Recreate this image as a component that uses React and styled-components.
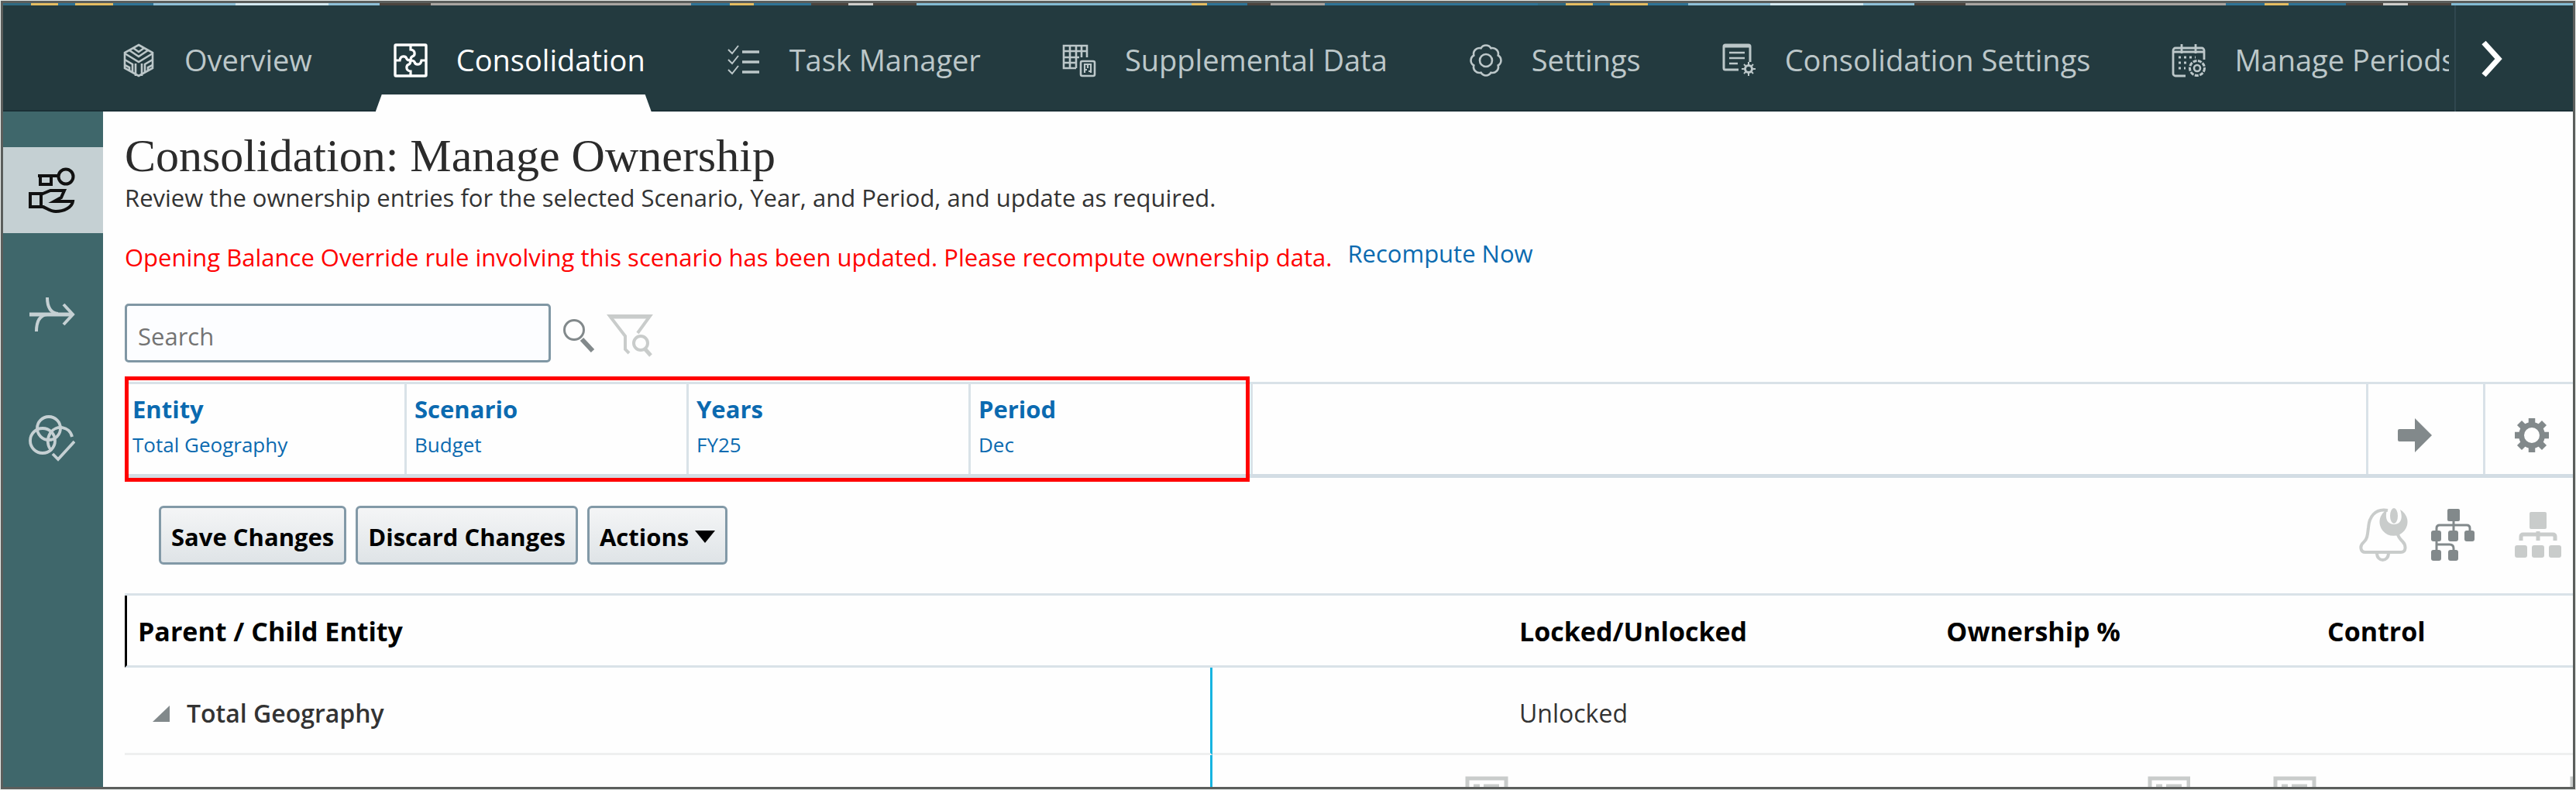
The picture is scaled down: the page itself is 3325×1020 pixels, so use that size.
import { useState } from "react";
import styled, { createGlobalStyle } from "styled-components";

const colors = {
    nav: '#233a3f',
    rail: '#3f676b',
    railActive: '#c5d0d3',
    frame: '#5b5e5c',
    page: '#fefefe',
    line: '#d9e2e8',
    rowLine: '#eeefef',
    link: '#0b6ab0',
    text: '#333333',
    iconDark: '#82898b',
    iconLight: '#c9cccb',
}

const GlobalStyle = createGlobalStyle`
    * { box-sizing: border-box; }
    body {
        margin: 0;
        background-color: #e4e8e6;
        font-family: 'Open Sans', 'Noto Sans', sans-serif;
        color: ${colors.text};
    }
    button { font-family: inherit; cursor: pointer; }
`
const Frame = styled.div`
    display: flex;
    flex-direction: column;
    height: 100vh;
    border: 1px solid #e4e8e6;
    background-color: ${colors.page};
    overflow: hidden;
`
const Window = styled.div`
    display: flex;
    flex-direction: column;
    flex: 1;
    min-height: 0;
    border: 3px solid ${colors.frame};
`
const Banner = styled.div`
    height: 3px;
    flex: none;
    background-size: 1981px 3px;
    background-image: linear-gradient(90deg,
        #2f6a83 0 36px, #e5bd62 36px 71px, #2f7396 71px 93px, #e5bd62 93px 142px,
        #2f7396 142px 194px, #8fc0d8 194px 300px, #d3e8f0 300px 420px, #8fc0d8 420px 486px,
        #4b443e 486px 552px, #a9a5a1 552px 888px, #2f7396 888px 938px, #e5bd62 938px 969px,
        #2f7396 969px 1043px, #4b443e 1043px 1091px, #cfcdca 1091px 1123px, #4b443e 1123px 1179px,
        #83bad3 1179px 1534px, #e5bd62 1534px 1554px, #2f7396 1554px 1606px, #4b443e 1606px 1636px,
        #a9a5a1 1636px 1706px, #2f7396 1706px 1981px);
`
const NavBar = styled.header`
    display: flex;
    flex: none;
    height: 137px;
    background-color: ${colors.nav};
    box-shadow: inset 0 -2px #1b3036;
`
const NavList = styled.nav`
    display: flex;
    flex: 1;
    gap: 74px;
    min-width: 0;
    padding-left: 130px;
    margin-right: 7px;
    overflow: hidden;
`
const NavItem = styled.a`
    display: flex;
    flex: none;
    position: relative;
    align-items: center;
    gap: 37px;
    height: 137px;
    padding: 2px 8px 0 23px;
    font-size: 38px;
    line-height: 52px;
    text-decoration: none;
    white-space: nowrap;
    color: ${({ $active }) => $active ? '#ffffff' : '#bcc7c9'};

    svg {
        margin-top: 3px;
    }
    &::after {
        content: '';
        display: ${({ $active }) => $active ? 'block' : 'none'};
        position: absolute;
        left: 0;
        right: 0;
        bottom: 0;
        height: 22px;
        background-color: ${colors.page};
        clip-path: polygon(8px 0, calc(100% - 8px) 0, 100% 100%, 0 100%);
    }
`
const NavMore = styled.button`
    display: flex;
    align-items: center;
    width: 153px;
    padding: 0 0 0 32px;
    border: none;
    border-left: 2px solid #30474f;
    background-color: transparent;
    color: #ffffff;
`
const Body = styled.div`
    display: flex;
    flex: 1;
    min-height: 0;
`
const Rail = styled.aside`
    display: flex;
    flex-direction: column;
    flex: none;
    gap: 49px;
    width: 129px;
    padding-top: 46px;
    background-color: ${colors.rail};
`
const RailButton = styled.button`
    display: flex;
    align-items: center;
    justify-content: center;
    height: 111px;
    padding: 0 4px 0 0;
    border: none;
    background-color: ${({ $active }) => $active ? colors.railActive : 'transparent'};
    color: ${({ $active }) => $active ? '#111111' : '#c5d0d3'};
`
const Main = styled.main`
    flex: 1;
    min-width: 0;
    padding: 23px 0 0 28px;
    overflow: hidden;
`
const Title = styled.h1`
    margin: 0;
    font-family: Georgia, 'Liberation Serif', serif;
    font-size: 60px;
    font-weight: normal;
    line-height: 68px;
    color: #2b2b2b;
`
const Description = styled.p`
    margin: 0;
    font-size: 31px;
    line-height: 40px;
`
const Notice = styled.div`
    display: flex;
    align-items: center;
    gap: 20px;
    margin-top: 37px;
    font-size: 31px;
    line-height: 40px;
    color: #ff0000;
`
const RecomputeLink = styled.a`
    padding-bottom: 10px;
    line-height: 30px;
    text-decoration: none;
    color: ${colors.link};
`
const SearchRow = styled.form`
    display: flex;
    align-items: center;
    gap: 15px;
    margin-top: 40px;

    button {
        padding-top: 5px;
    }
`
const SearchInput = styled.input`
    width: 550px;
    height: 76px;
    padding: 8px 14px 0;
    border: 3px solid #8097a4;
    border-radius: 5px;
    background-color: #fcfdff;
    font-family: inherit;
    font-size: 31px;
    color: ${colors.text};

    &::placeholder {
        color: #737373;
        opacity: 1;
    }
`
const IconButton = styled.button`
    display: flex;
    align-items: center;
    justify-content: center;
    padding: 0;
    border: none;
    background-color: transparent;
    color: ${({ $light }) => $light ? colors.iconLight : colors.iconDark};
`
const PovBar = styled.section`
    display: flex;
    height: 124px;
    margin-top: 25px;
    border-top: 3px solid ${colors.line};
    border-bottom: 5px solid #d3dde4;
`
const PovMembers = styled.div`
    display: flex;
    flex: none;
    position: relative;

    &::after {
        content: '';
        position: absolute;
        inset: -10px 4px -10px 0;
        border: 5px solid #ff0000;
        pointer-events: none;
    }
`
const PovMember = styled.button`
    display: flex;
    flex-direction: column;
    align-items: flex-start;
    width: 364px;
    padding: 8px 10px 0;
    border: none;
    border-right: 3px solid ${colors.line};
    background-color: transparent;
    color: ${colors.link};
`
const PovName = styled.span`
    font-size: 31px;
    font-weight: 700;
    line-height: 48px;
`
const PovValue = styled.span`
    font-size: 26px;
    line-height: 44px;
`
const PovAction = styled(IconButton)`
    justify-content: flex-start;
    width: ${({ $width }) => $width}px;
    padding: 16px 0 0 38px;
    border-left: 3px solid ${colors.line};

    &:first-of-type {
        margin-left: auto;
    }
`
const Toolbar = styled.div`
    display: flex;
    align-items: center;
    gap: 12px;
    height: 76px;
    margin: 36px 14px 37px 44px;
`
const ToolButton = styled.button`
    display: flex;
    align-items: center;
    gap: 8px;
    height: 76px;
    padding: 4px 13px 0;
    border: 3px solid #8299a7;
    border-radius: 6px;
    background: linear-gradient(#f4f5f6, #dfe4e7);
    font-size: 31px;
    font-weight: 700;
    white-space: nowrap;
    color: #000000;
`
const ViewButtons = styled.div`
    display: flex;
    gap: 28px;
    margin-left: auto;

    button:last-child {
        margin-left: 22px;
    }
`
const Grid = styled.table`
    width: 100%;
    table-layout: fixed;
    border-collapse: separate;
    border-spacing: 0;
    border-top: 3px solid ${colors.line};
`
const Col = styled.col`
    width: ${({ $width }) => $width}px;
`
const HeadCell = styled.th`
    height: 93px;
    padding: 2px 14px 0;
    border-bottom: 3px solid ${colors.line};
    border-left: ${({ $first }) => $first ? '3px solid #000000' : 'none'};
    font-size: 34px;
    font-weight: 700;
    line-height: 44px;
    text-align: ${({ $right }) => $right ? 'right' : 'left'};
    white-space: nowrap;
    color: #000000;
`
const Cell = styled.td`
    height: 113px;
    padding: 8px 14px 0;
    border-bottom: 3px solid ${colors.rowLine};
    border-right: ${({ $divider }) => $divider ? '3px solid #17b4e0' : 'none'};
    font-size: 32px;
    line-height: 44px;
    white-space: nowrap;
`
const IconCell = styled(Cell)`
    padding: 27px 0 0 21px;
    vertical-align: top;
    overflow: hidden;
`
const TreeLabel = styled.div`
    display: flex;
    align-items: center;
    gap: 22px;
    padding-left: 22px;
    font-weight: 600;
`

const NavIcon = ({ children }) => (
    <svg width="44" height="44" viewBox="0 0 44 44" fill="none" stroke="currentColor" strokeWidth="2.6" aria-hidden="true">
        {children}
    </svg>
)

const OverviewIcon = () => (
    <NavIcon>
        <path d="M22 2 40 12v20L22 42 4 32V12z" />
        <path d="M10 9l12 8 12-8M15 6l7 5 7-5M4 13l18 11 18-11M18 42V26M26 42V26M4 21l10 6v11M40 21l-10 6v11M4 28l6 3v5M40 28l-6 3v5" />
    </NavIcon>
)
const ConsolidationIcon = () => (
    <NavIcon>
        <rect x="2" y="2" width="40" height="40" rx="1" strokeWidth="3.4" />
        <path d="M22 3v5c7 1 6 8 2 9-2 1-2 3-2 5M41 22h-5c-1 7-8 6-9 2-1-2-3-2-5-2M22 41v-5c-7-1-6-8-2-9 2-1 2-3 2-5M3 22h5c1-7 8-6 9-2 1 2 3 2 5 2" strokeWidth="3.2" />
    </NavIcon>
)
const TaskIcon = () => (
    <NavIcon>
        <path d="M2 8l5 5 8-10M2 21l5 5 8-10M2 34l5 5 8-10" strokeWidth="2" />
        <path d="M20 11h22M20 24h22M20 37h22" strokeWidth="3.6" />
    </NavIcon>
)
const SupplementalIcon = () => (
    <NavIcon>
        <path d="M18 32H2V3h30v15M2 10h30M2 18h20M2 25h15M10 3v29M18 3v29M25 3v15" />
        <rect x="24" y="23" width="18" height="19" rx="2" />
        <path d="M29 38V27h8v11M33 28v4M29 34h3M34 36h4" strokeWidth="2.2" />
    </NavIcon>
)
const SettingsIcon = () => (
    <NavIcon>
        <path d="M37.7 28.5A7.5 7.5 0 0 1 28.5 37.7 7.5 7.5 0 0 1 15.500 37.7 7.5 7.5 0 0 1 6.300 28.5 7.5 7.5 0 0 1 6.300 15.500 7.5 7.5 0 0 1 15.500 6.300 7.5 7.5 0 0 1 28.5 6.300 7.5 7.5 0 0 1 37.7 15.500 7.5 7.5 0 0 1 37.7 28.5z" />
        <circle cx="22" cy="22" r="8" />
    </NavIcon>
)
const ConsolidationSettingsIcon = () => (
    <NavIcon>
        <path d="M21 34H4a2 2 0 0 1-2-2V4a2 2 0 0 1 2-2h30a2 2 0 0 1 2 2v20M2 4h34" strokeWidth="3" />
        <path d="M9 12h20M9 19h20M9 26h11" />
        <circle cx="34" cy="33" r="4.500" strokeWidth="3" />
        <path d="M34 24v4M34 38v4M25 33h4M39 33h4M28 27l2.500 2.500M37.500 36.500 40 39M28 39l2.500-2.500M37.500 29.500 40 27" strokeWidth="2" />
    </NavIcon>
)
const ManagePeriodsIcon = () => (
    <NavIcon>
        <path d="M18 42H5a3 3 0 0 1-3-3V9a3 3 0 0 1 3-3h34a3 3 0 0 1 3 3v12M2 11h40M13 1v12M31 1v12" strokeWidth="2.800" />
        <path d="M9 18h22M9 25h13M9 32h9" strokeDasharray="3 4" strokeWidth="3" />
        <circle cx="33" cy="32" r="9.500" strokeDasharray="5 1.500" strokeWidth="3" />
        <circle cx="33" cy="32" r="4" />
    </NavIcon>
)

const OwnershipIcon = () => (
    <svg width="60" height="60" viewBox="0 0 60 60" fill="none" stroke="currentColor" strokeWidth="4" aria-hidden="true">
        <circle cx="48" cy="12" r="9.500" />
        <path d="M39 11H12M15 12v10h14V12" />
        <path d="M2 34h14v17H2zM16 35l12-5h18l-4 9-9 5h24c-1 8-12 13-22 13-8 0-12-5-19-7" />
    </svg>
)
const FlowIcon = () => (
    <svg width="60" height="46" viewBox="0 0 60 46" fill="none" stroke="currentColor" strokeWidth="4" aria-hidden="true">
        <path d="M1 23h56" strokeWidth="5" />
        <path d="M45 10l12 13-12 13M24 1c0 11 3 20 14 21M10 45c0-12 4-21 14-22" />
    </svg>
)
const RulesIcon = () => (
    <svg width="60" height="60" viewBox="0 0 60 60" fill="none" stroke="currentColor" strokeWidth="3.800" aria-hidden="true">
        <circle cx="26" cy="17" r="15" />
        <circle cx="18" cy="33" r="16" />
        <path d="M56 28C53 14 35 12 28 23c-5 8-4 18 2 23M31 50l7 7 21-23" />
    </svg>
)
const MagnifierIcon = () => (
    <svg width="42" height="44" viewBox="0 0 42 44" fill="none" stroke="currentColor" aria-hidden="true">
        <circle cx="15" cy="15" r="12.500" strokeWidth="3" />
        <path d="M25 27l14 15" strokeWidth="6" />
    </svg>
)
const FilterIcon = () => (
    <svg width="60" height="56" viewBox="0 0 60 56" fill="none" stroke="currentColor" strokeWidth="4" aria-hidden="true">
        <path d="M29 51l-5-5V29L4 3h52L40 25" />
        <path d="M4 4h52" strokeWidth="5" />
        <circle cx="44" cy="38" r="9" />
        <path d="M49 45l8 9" strokeWidth="5" />
    </svg>
)
const ArrowIcon = () => (
    <svg width="44" height="44" viewBox="0 0 44 44" fill="currentColor" aria-hidden="true">
        <path d="M2 14h20V0l22 22-22 22V30H2q-2 0-2-2V16q0-2 2-2z" />
    </svg>
)
const GearIcon = () => (
    <svg width="44" height="44" viewBox="0 0 44 44" fill="none" stroke="currentColor" aria-hidden="true">
        <circle cx="22" cy="22" r="13.500" strokeWidth="7" />
        <path d="M22 0v8M22 36v8M0 22h8M36 22h8M6 6l6 6M32 32l6 6M6 38l6-6M32 12l6-6" strokeWidth="8.500" />
    </svg>
)
const BellIcon = () => (
    <svg width="64" height="70" viewBox="0 0 64 70" fill="none" stroke="currentColor" strokeWidth="4" aria-hidden="true">
        <path d="M37 3C20 0 13 12 12 25c-1 8-1 15-6 19-6 5-4 13 2 13h46c7 0 7-9 2-14-3-3-5-5-6-9M23 58c0 12 15 12 15 0" />
        <path d="M36 2a18 18 0 1 0 17 0c4 11 1 19-8 19s-12-8-9-19z" fill="currentColor" stroke="none" />
        <ellipse cx="45" cy="10" rx="5" ry="10" fill="currentColor" stroke="none" />
    </svg>
)
const TreeIcon = () => (
    <svg width="58" height="68" viewBox="0 0 58 68" fill="currentColor" aria-hidden="true">
        <rect x="22" y="0" width="16" height="16" rx="2" />
        <rect x="1" y="28" width="13" height="14" rx="3" />
        <rect x="23" y="28" width="13" height="14" rx="3" />
        <rect x="44" y="28" width="13" height="14" rx="3" />
        <rect x="1" y="53" width="13" height="14" rx="3" />
        <rect x="23" y="53" width="13" height="14" rx="3" />
        <path d="M30 14v16M8 30v-5q0-4 4-4h35q4 0 4 4v5M8 40v15M8 46h17q5 0 5 5v4" fill="none" stroke="currentColor" strokeWidth="3" />
    </svg>
)
const OrgChartIcon = () => (
    <svg width="62" height="68" viewBox="0 0 62 68" fill="currentColor" aria-hidden="true">
        <rect x="20" y="4" width="22" height="22" rx="2" />
        <rect x="1" y="47" width="16" height="16" rx="3" />
        <rect x="23" y="47" width="16" height="16" rx="3" />
        <rect x="45" y="47" width="16" height="16" rx="3" />
        <path d="M9 41v-5q0-3 3-3h38q3 0 3 3v5M31 29v12" fill="none" stroke="currentColor" strokeWidth="5" />
    </svg>
)
const FormIcon = () => (
    <svg width="56" height="50" viewBox="0 0 56 50" fill="none" stroke="currentColor" aria-hidden="true">
        <path d="M3 50V3h50v47" strokeWidth="5" />
        <path d="M11 13h8M24 13h20M11 24h8M24 24h20" strokeWidth="5" />
    </svg>
)

const tabs = [
    { label: 'Overview', Icon: OverviewIcon },
    { label: 'Consolidation', Icon: ConsolidationIcon },
    { label: 'Task Manager', Icon: TaskIcon },
    { label: 'Supplemental Data', Icon: SupplementalIcon },
    { label: 'Settings', Icon: SettingsIcon },
    { label: 'Consolidation Settings', Icon: ConsolidationSettingsIcon },
    { label: 'Manage Periods', Icon: ManagePeriodsIcon },
]

const railItems = [
    { label: 'Manage Ownership', Icon: OwnershipIcon },
    { label: 'Journals', Icon: FlowIcon },
    { label: 'Rules', Icon: RulesIcon },
]

const members = [
    { name: 'Entity', value: 'Total Geography' },
    { name: 'Scenario', value: 'Budget' },
    { name: 'Years', value: 'FY25' },
    { name: 'Period', value: 'Dec' },
]

const columnWidths = [305, 77, 498, 306, 76, 86, 77, 306, 25]

const App = () => {
    const [activeTab, setActiveTab] = useState('Consolidation')
    const [activeRail, setActiveRail] = useState('Manage Ownership')
    const [search, setSearch] = useState('')

    return (
        <Frame>
            <GlobalStyle />
            <Window>
                <Banner />
                <NavBar>
                    <NavList>
                        {tabs.map(({ label, Icon }) => (
                            <NavItem
                                key={label}
                                href="#"
                                $active={label === activeTab}
                                onClick={() => setActiveTab(label)}>
                                <Icon />
                                {label}
                            </NavItem>
                        ))}
                    </NavList>
                    <NavMore type="button" aria-label="More tabs">
                        <svg width="30" height="48" viewBox="0 0 30 48" fill="none" stroke="currentColor" strokeWidth="7" aria-hidden="true">
                            <path d="M4 3l19 21L4 45" />
                        </svg>
                    </NavMore>
                </NavBar>
                <Body>
                    <Rail>
                        {railItems.map(({ label, Icon }) => (
                            <RailButton
                                key={label}
                                type="button"
                                aria-label={label}
                                $active={label === activeRail}
                                onClick={() => setActiveRail(label)}>
                                <Icon />
                            </RailButton>
                        ))}
                    </Rail>
                    <Main>
                        <Title>Consolidation: Manage Ownership</Title>
                        <Description>
                            Review the ownership entries for the selected Scenario, Year, and Period, and update as required.
                        </Description>
                        <Notice>
                            <span>Opening Balance Override rule involving this scenario has been updated. Please recompute ownership data.</span>
                            <RecomputeLink href="#">Recompute Now</RecomputeLink>
                        </Notice>
                        <SearchRow onSubmit={(event) => event.preventDefault()}>
                            <SearchInput
                                type="text"
                                aria-label="Search"
                                placeholder="Search"
                                value={search}
                                onChange={(event) => setSearch(event.target.value)} />
                            <IconButton type="submit" aria-label="Search"><MagnifierIcon /></IconButton>
                            <IconButton type="button" aria-label="Filter" $light><FilterIcon /></IconButton>
                        </SearchRow>
                        <PovBar>
                            <PovMembers>
                                {members.map(({ name, value }) => (
                                    <PovMember key={name} type="button">
                                        <PovName>{name}</PovName>
                                        <PovValue>{value}</PovValue>
                                    </PovMember>
                                ))}
                            </PovMembers>
                            <PovAction type="button" aria-label="Go" $width={151}><ArrowIcon /></PovAction>
                            <PovAction type="button" aria-label="Settings" $width={116}><GearIcon /></PovAction>
                        </PovBar>
                        <Toolbar>
                            <ToolButton type="button">Save Changes</ToolButton>
                            <ToolButton type="button">Discard Changes</ToolButton>
                            <ToolButton type="button">
                                Actions
                                <svg width="26" height="16" viewBox="0 0 26 16" aria-hidden="true">
                                    <path d="M0 0h26L13 16z" />
                                </svg>
                            </ToolButton>
                            <ViewButtons>
                                <IconButton type="button" aria-label="Notifications" $light><BellIcon /></IconButton>
                                <IconButton type="button" aria-label="Tree view"><TreeIcon /></IconButton>
                                <IconButton type="button" aria-label="Organization chart" $light><OrgChartIcon /></IconButton>
                            </ViewButtons>
                        </Toolbar>
                        <Grid>
                            <colgroup>
                                <col />
                                {columnWidths.map((width, index) => (
                                    <Col key={index} $width={width} />
                                ))}
                            </colgroup>
                            <thead>
                                <tr>
                                    <HeadCell $first>Parent / Child Entity</HeadCell>
                                    <HeadCell as="td" colSpan={2} />
                                    <HeadCell>Locked/Unlocked</HeadCell>
                                    <HeadCell $right>Ownership %</HeadCell>
                                    <HeadCell as="td" colSpan={3} />
                                    <HeadCell>Control</HeadCell>
                                    <HeadCell as="td" />
                                </tr>
                            </thead>
                            <tbody>
                                <tr>
                                    <Cell $divider>
                                        <TreeLabel>
                                            <svg width="22" height="21" viewBox="0 0 22 21" fill={colors.iconDark} aria-hidden="true">
                                                <path d="M22 0v21H0z" />
                                            </svg>
                                            Total Geography
                                        </TreeLabel>
                                    </Cell>
                                    <Cell colSpan={2} />
                                    <Cell>Unlocked</Cell>
                                    <Cell colSpan={6} />
                                </tr>
                                <tr>
                                    <Cell $divider />
                                    <Cell />
                                    <IconCell><IconButton type="button" aria-label="Details" $light><FormIcon /></IconButton></IconCell>
                                    <Cell />
                                    <Cell />
                                    <IconCell><IconButton type="button" aria-label="Details" $light><FormIcon /></IconButton></IconCell>
                                    <Cell />
                                    <IconCell><IconButton type="button" aria-label="Details" $light><FormIcon /></IconButton></IconCell>
                                    <Cell />
                                    <IconCell><IconButton type="button" aria-label="Details" $light><FormIcon /></IconButton></IconCell>
                                </tr>
                            </tbody>
                        </Grid>
                    </Main>
                </Body>
            </Window>
        </Frame>
    )
}

export default App;
